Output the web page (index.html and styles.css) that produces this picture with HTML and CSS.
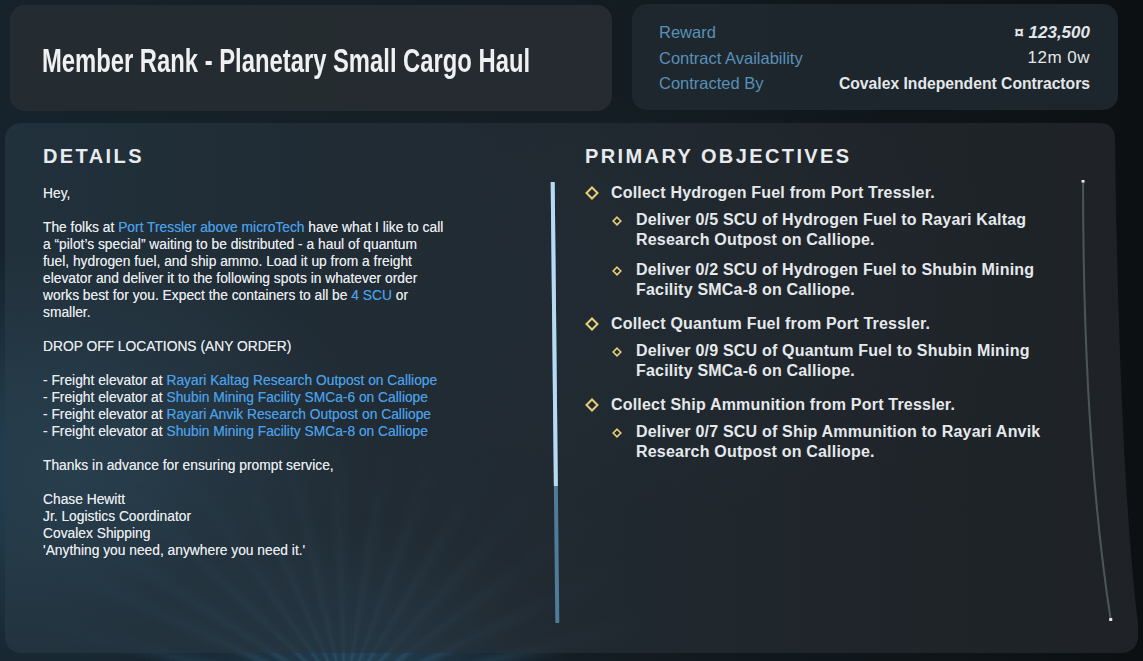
FILE: index.html
```html
<!DOCTYPE html>
<html lang="en">
<head>
<meta charset="utf-8">
<title>Contract</title>
<link rel="stylesheet" href="styles.css">
</head>
<body>
<div class="rays"></div>
<div class="page">
  <div class="top">
    <div class="title-card">
      <h1 class="title">Member Rank - Planetary Small Cargo Haul</h1>
    </div>
    <div class="info-card">
      <div class="info-row"><span class="label">Reward</span><span class="value reward">¤ 123,500</span></div>
      <div class="info-row"><span class="label">Contract Availability</span><span class="value plain">12m 0w</span></div>
      <div class="info-row"><span class="label">Contracted By</span><span class="value">Covalex Independent Contractors</span></div>
    </div>
  </div>

  <div class="main">
    <section class="details">
      <h2 class="heading">DETAILS</h2>
      <div class="details-body">
        <div class="text">
          <p>Hey,</p>
          <p>The folks at <span class="link">Port Tressler above microTech</span> have what I like to call<br>a “pilot’s special” waiting to be distributed - a haul of quantum<br>fuel, hydrogen fuel, and ship ammo. Load it up from a freight<br>elevator and deliver it to the following spots in whatever order<br>works best for you. Expect the containers to all be <span class="link">4 SCU</span> or<br>smaller.</p>
          <p>DROP OFF LOCATIONS (ANY ORDER)</p>
          <p>- Freight elevator at <span class="link">Rayari Kaltag Research Outpost on Calliope</span><br>- Freight elevator at <span class="link">Shubin Mining Facility SMCa-6 on Calliope</span><br>- Freight elevator at <span class="link">Rayari Anvik Research Outpost on Calliope</span><br>- Freight elevator at <span class="link">Shubin Mining Facility SMCa-8 on Calliope</span></p>
          <p>Thanks in advance for ensuring prompt service,</p>
          <p>Chase Hewitt<br>Jr. Logistics Coordinator<br>Covalex Shipping<br>'Anything you need, anywhere you need it.'</p>
        </div>
        <div class="scroll"><div class="thumb"></div></div>
      </div>
    </section>

    <section class="objectives">
      <h2 class="heading">PRIMARY OBJECTIVES</h2>
      <ul class="obj-list">
        <li class="obj">
          <div class="obj-line"><svg class="dia" viewBox="0 0 14 14"><path d="M7 1.5 L12.5 7 L7 12.5 L1.5 7 Z"/></svg><span>Collect Hydrogen Fuel from Port Tressler.</span></div>
          <ul class="sub-list">
            <li class="obj-line sub"><svg class="dia small" viewBox="0 0 10 10"><path d="M5 1.2 L8.8 5 L5 8.8 L1.2 5 Z"/></svg><span>Deliver 0/5 SCU of Hydrogen Fuel to Rayari Kaltag<br>Research Outpost on Calliope.</span></li>
            <li class="obj-line sub"><svg class="dia small" viewBox="0 0 10 10"><path d="M5 1.2 L8.8 5 L5 8.8 L1.2 5 Z"/></svg><span>Deliver 0/2 SCU of Hydrogen Fuel to Shubin Mining<br>Facility SMCa-8 on Calliope.</span></li>
          </ul>
        </li>
        <li class="obj">
          <div class="obj-line"><svg class="dia" viewBox="0 0 14 14"><path d="M7 1.5 L12.5 7 L7 12.5 L1.5 7 Z"/></svg><span>Collect Quantum Fuel from Port Tressler.</span></div>
          <ul class="sub-list">
            <li class="obj-line sub"><svg class="dia small" viewBox="0 0 10 10"><path d="M5 1.2 L8.8 5 L5 8.8 L1.2 5 Z"/></svg><span>Deliver 0/9 SCU of Quantum Fuel to Shubin Mining<br>Facility SMCa-6 on Calliope.</span></li>
          </ul>
        </li>
        <li class="obj">
          <div class="obj-line"><svg class="dia" viewBox="0 0 14 14"><path d="M7 1.5 L12.5 7 L7 12.5 L1.5 7 Z"/></svg><span>Collect Ship Ammunition from Port Tressler.</span></div>
          <ul class="sub-list">
            <li class="obj-line sub"><svg class="dia small" viewBox="0 0 10 10"><path d="M5 1.2 L8.8 5 L5 8.8 L1.2 5 Z"/></svg><span>Deliver 0/7 SCU of Ship Ammunition to Rayari Anvik<br>Research Outpost on Calliope.</span></li>
          </ul>
        </li>
      </ul>
      <svg class="curve" viewBox="0 0 40 450" preserveAspectRatio="none"><path d="M2 2 C 2 150, 8 300, 29 440"/><rect x="0.5" y="0" width="3" height="2.5" class="cap"/><rect x="27.5" y="438" width="3" height="3" class="cap"/></svg>
    </section>
  </div>
</div>
</body>
</html>
```

FILE: styles.css
```css
* { box-sizing: border-box; }
html, body { margin: 0; padding: 0; }
body {
  width: 1143px;
  height: 661px;
  overflow: hidden;
  position: relative;
  font-family: "Liberation Sans", "DejaVu Sans", sans-serif;
  color: #e3e7ea;
  background:
    radial-gradient(ellipse 420px 320px at 80px 470px, rgba(52, 98, 128, 0.55), rgba(52, 98, 128, 0) 70%),
    radial-gradient(ellipse 300px 200px at 360px 661px, rgba(48, 96, 128, 0.5), rgba(48, 96, 128, 0) 70%),
    radial-gradient(ellipse 500px 300px at 700px 300px, rgba(40, 60, 72, 0.35), rgba(40, 60, 72, 0) 70%),
    linear-gradient(90deg, #16232c 0%, #141d23 50%, #0c1013 100%);
}
.rays {
  position: absolute;
  left: 0; top: 0; width: 1143px; height: 661px;
  background: repeating-conic-gradient(from 300deg at 345px 700px,
      rgba(70, 130, 170, 0) 0deg, rgba(70, 130, 170, 0.22) 3deg, rgba(70, 130, 170, 0) 7deg, rgba(70,130,170,0) 11deg);
  -webkit-mask-image: radial-gradient(ellipse 330px 260px at 345px 680px, #000 20%, transparent 100%);
  mask-image: radial-gradient(ellipse 330px 260px at 345px 680px, #000 20%, transparent 100%);
  pointer-events: none;
}
.page {
  position: relative;
  padding: 4px 5px 0 5px;
}
.top {
  display: flex;
  align-items: flex-start;
  padding-left: 5px;
  gap: 20px;
}
.title-card {
  width: 602px;
  height: 106px;
  margin-top: 1px;
  border-radius: 15px;
  background: rgba(40, 45, 50, 0.88);
  display: flex;
  align-items: center;
  padding-left: 32px;
}
.title {
  margin: 0;
  padding-top: 4px;
  white-space: nowrap;
  font-family: "Liberation Sans", sans-serif;
  font-weight: bold;
  font-size: 34px;
  color: #eef0f2;
  transform: scaleX(0.70);
  transform-origin: left center;
}
.info-card {
  width: 486px;
  height: 106px;
  border-radius: 15px;
  background: rgba(30, 40, 47, 0.92);
  padding: 16px 28px 0 27px;
  display: flex;
  flex-direction: column;
}
.info-row {
  display: flex;
  justify-content: space-between;
  align-items: center;
  height: 25.5px;
}
.label {
  color: #5a90b6;
  font-size: 16.5px;
}
.value {
  font-size: 15.7px;
  font-weight: bold;
  color: #e4e7ea;
}
.value.reward { font-style: italic; font-size: 17px; }
.value.plain { font-weight: normal; font-size: 17px; letter-spacing: 0.5px; }

.main {
  margin-top: 12px;
  height: 530px;
  border-radius: 16px;
  background: linear-gradient(90deg, rgba(42, 60, 72, 0.55) 0%, rgba(38, 46, 54, 0.7) 50%, rgba(32, 36, 40, 0.92) 100%);
  clip-path: path('M16 0 H1094 Q1110 0 1110 16 C 1112 200, 1120 400, 1133 500 V514 Q1133 530 1117 530 H16 Q0 530 0 514 V16 Q0 0 16 0 Z');
  display: flex;
}
.heading {
  margin: 0;
  font-size: 20px;
  font-weight: bold;
  letter-spacing: 2.4px;
  color: #e8ebee;
  line-height: 24px;
}
.details {
  width: 555px;
  padding: 21px 0 0 38px;
  display: flex;
  flex-direction: column;
}
.details-body {
  display: flex;
  margin-top: 11px;
}
.text {
  width: 510px;
  font-size: 13.8px;
  line-height: 17px;
  color: #e8ebee;
  padding-top: 6px;
  text-shadow: 0 0 0.5px rgba(232, 235, 238, 0.7);
}
.text p { margin: 0 0 17px 0; }
.link { color: #4a9fe6; text-shadow: 0 0 0.5px rgba(74, 159, 230, 0.7); }
.scroll {
  width: 4px;
  height: 441px;
  margin-top: 3px;
  background: #4d7d98;
  border-radius: 1px;
  transform: rotate(-0.6deg);
}
.thumb {
  height: 304px;
  background: #b6daf4;
}
.objectives {
  flex: 1;
  position: relative;
  padding: 21px 0 0 25px;
}
.obj-list, .sub-list {
  list-style: none;
  margin: 0;
  padding: 0;
}
.obj-list { margin-top: 15px; }
.obj { margin-bottom: 14px; }
.obj-line {
  display: flex;
  align-items: flex-start;
  font-size: 16px;
  letter-spacing: 0.2px;
  font-weight: bold;
  line-height: 20px;
  color: #e6e9ec;
}
.obj > .obj-line { margin-bottom: 7px; }
.obj-line .dia {
  width: 14px;
  height: 14px;
  margin: 3px 12px 0 0;
  flex: none;
}
.dia path {
  fill: none;
  stroke: #e8cf78;
  stroke-width: 2;
}
.sub { padding-left: 27px; margin-bottom: 10px; }
.sub .dia.small {
  width: 10px;
  height: 10px;
  margin: 6px 14px 0 0;
}
.dia.small path { stroke-width: 1.6; }
.curve {
  position: absolute;
  left: 521px;
  top: 57px;
  width: 41px;
  height: 450px;
  overflow: visible;
}
.curve path {
  fill: none;
  stroke: #4a555c;
  stroke-width: 2;
}
.curve .cap { fill: #dfe6ea; }
```
